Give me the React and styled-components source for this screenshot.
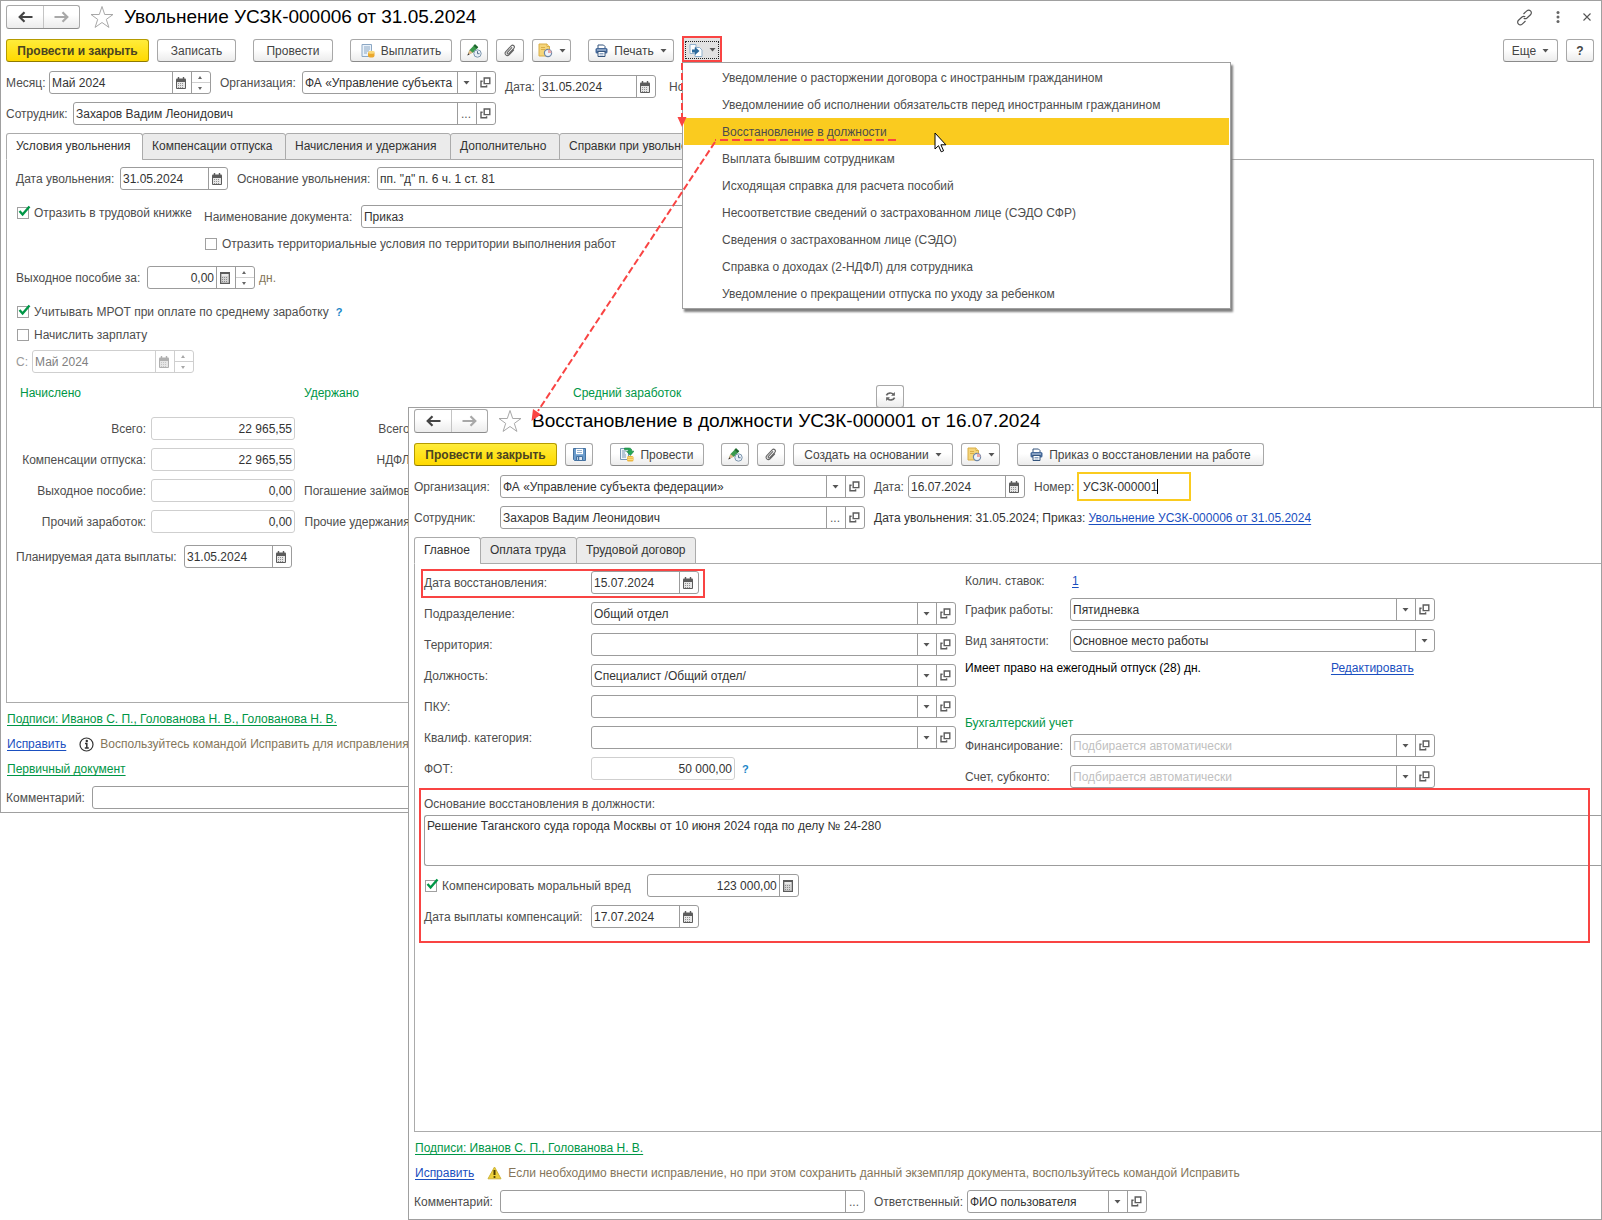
import React, { useId } from 'react'
import styled, { createGlobalStyle, css } from 'styled-components'

const GlobalStyle = createGlobalStyle`
  * {
    box-sizing: border-box;
  }
  body {
    margin: 0;
    background: #fff;
    color: #4d4d4d;
    font-family: "Liberation Sans", Arial, sans-serif;
    font-size: 12px;
    line-height: 16px;
  }
  button, input, select, textarea {
    font: inherit;
    color: inherit;
    margin: 0;
  }
`

const Desktop = styled.div`
  position: relative;
  min-height: 100vh;
  overflow: hidden;
`

const Window = styled.section`
  display: flex;
  flex-direction: column;
  background: #fff;
  border: 1px solid #a0a0a0;
  padding: 4px 7px 3px 5px;
`

const FrontWindow = styled(Window)`
  position: absolute;
  top: 407px;
  left: 408px;
  right: 0;
  padding: 1px 0 6px 5px;
  overflow: hidden;
`

const Header = styled.header`
  display: flex;
  align-items: center;
  height: 24px;
`

const Title = styled.h1`
  margin: 0 0 0 10px;
  flex: 1;
  color: #000;
  font-size: 19px;
  font-weight: normal;
  line-height: 24px;
  white-space: nowrap;
`

const NavGroup = styled.div`
  display: flex;
  height: 24px;
  margin-right: 10px;
  border: 1px solid #a8a8a8;
  border-bottom-color: #8c8c8c;
  border-radius: 3px;
  background: linear-gradient(#fff 40%, #ececec);
`

const NavButton = styled.button`
  display: flex;
  align-items: center;
  justify-content: center;
  width: 36px;
  padding: 0;
  border: 0;
  background: none;
  color: #444;
  & + & {
    border-left: 1px solid #c4c4c4;
    color: #a8a8a8;
  }
`

const PlainButton = styled.button`
  display: flex;
  padding: 0;
  border: 0;
  background: none;
  color: #555;
`

const WindowTools = styled.div`
  display: flex;
  align-items: center;
  gap: 23px;
  padding-right: 3px;
`

const Toolbar = styled.div`
  display: flex;
  gap: 8px;
  margin-top: 10px;
`

const Button = styled.button`
  display: flex;
  align-items: center;
  justify-content: center;
  gap: 6px;
  width: ${({ $width }) => $width}px;
  height: 23px;
  margin-left: ${({ $apart }) => ($apart ? 9 : 0)}px;
  padding: 0;
  border: 1px solid #a8a8a8;
  border-bottom: 1px solid #8a8a8a;
  border-radius: 3px;
  background: linear-gradient(#fff 45%, #ececec);
  color: #444;
  font-weight: ${({ $bold }) => ($bold ? 'bold' : 'normal')};
  white-space: nowrap;
  ${({ $main }) => $main && css`
    border-color: #b59b00;
    border-bottom-color: #8f7a00;
    background: linear-gradient(#ffec3a, #ffd900);
    color: #4a4420;
    font-weight: bold;
  `}
`

const Spacer = styled.div`
  flex: 1;
`

const MenuAnchor = styled.div`
  position: relative;
  display: flex;
  height: 26px;
  margin-top: -3px;
  border: 2px solid #f94443;
  padding: 3px 1px 0;
  background: #e2e2e2;
`

const PressedButton = styled(Button)`
  border: 1px dotted #222;
  border-radius: 0;
  background: #e2e2e2;
  height: 18px;
`

const Menu = styled.ul`
  position: absolute;
  z-index: 3;
  top: 24px;
  left: -2px;
  width: 549px;
  margin: 0;
  padding: 1px;
  list-style: none;
  background: #fff;
  border: 1px solid #a0a0a0;
  box-shadow: 2px 3px 2px #808080;
`

const MenuItem = styled.button`
  display: block;
  width: 100%;
  height: 27px;
  padding: 0 0 0 38px;
  border: 0;
  background: ${({ $active }) => ($active ? '#facb1f' : 'none')};
  text-align: left;
  white-space: nowrap;
`

const HeadFields = styled.div`
  display: flex;
  align-items: flex-start;
  gap: 9px;
  margin-top: 9px;
`

const Rows = styled.div`
  display: flex;
  flex-direction: column;
  gap: 8px;
`

const Row = styled.div`
  display: flex;
  align-items: ${({ $top }) => ($top ? 'flex-start' : 'center')};
  gap: ${({ $gap }) => $gap || 0}px;
  margin-top: ${({ $space }) => $space || 0}px;
`

const Labeled = styled.div`
  display: flex;
  align-items: center;
  flex: ${({ $grow }) => ($grow ? 1 : 'none')};
  position: relative;
`

const Label = styled.label`
  width: ${({ $width }) => ($width ? `${$width}px` : 'auto')};
  padding-right: 5px;
  text-align: ${({ $right }) => ($right ? 'right' : 'left')};
  white-space: nowrap;
  ${({ $muted }) => $muted && 'color: #999;'}
`

const Field = styled.div`
  display: flex;
  flex: ${({ $width }) => ($width ? 'none' : 1)};
  width: ${({ $width }) => ($width ? `${$width}px` : 'auto')};
  height: 23px;
  border: 1px solid ${({ $pale }) => ($pale ? '#cfcfcf' : '#9c9c9c')};
  border-radius: 3px;
  background: #fff;
  color: ${({ $muted }) => ($muted ? '#808080' : '#333')};
`

const inputStyle = css`
  flex: 1;
  min-width: 0;
  width: 100%;
  padding: 0 2px;
  border: 0;
  outline: 0;
  background: none;
  appearance: none;
`

const Input = styled.input`
  ${inputStyle}
  text-align: ${({ $right }) => ($right ? 'right' : 'left')};
`

const Select = styled.select`
  ${inputStyle}
  color: ${({ $hint }) => ($hint ? '#c0c0c0' : '#333')};
`

const Cell = styled.button`
  display: flex;
  align-items: center;
  justify-content: center;
  width: 19px;
  padding: 0 2px 0 0;
  border: 0;
  border-left: 1px solid ${({ $muted }) => ($muted ? '#cfcfcf' : '#9c9c9c')};
  background: none;
  color: ${({ $muted }) => ($muted ? '#b0b0b0' : '#5c5c5c')};
`

const Stepper = styled.span`
  display: flex;
  flex-direction: column;
  width: 19px;
  border-left: 1px solid ${({ $muted }) => ($muted ? '#cfcfcf' : '#9c9c9c')};
  color: ${({ $muted }) => ($muted ? '#a8a8a8' : '#666')};
`

const Step = styled.button`
  display: flex;
  flex: 1;
  align-items: center;
  justify-content: center;
  padding: 0 2px 0 0;
  border: 0;
  background: none;
  & + & {
    border-top: 1px solid ${({ $muted }) => ($muted ? '#cfcfcf' : '#9c9c9c')};
  }
`

const Tabs = styled.div`
  display: flex;
  margin-top: 8px;
`

const Tab = styled.button`
  height: 27px;
  margin-right: -1px;
  padding: 0 0 2px 9px;
  width: ${({ $width }) => $width}px;
  border: 1px solid #ababab;
  border-bottom-color: ${({ $active }) => ($active ? '#fff' : '#ababab')};
  border-radius: 3px 3px 0 0;
  background: ${({ $active }) => ($active ? '#fff' : '#ebebeb')};
  color: #333;
  text-align: left;
  white-space: nowrap;
  z-index: 1;
`

const Panel = styled.div`
  display: flex;
  flex-direction: column;
  min-height: ${({ $height }) => $height}px;
  margin-top: -1px;
  padding: 7px 9px;
  border: 1px solid #ababab;
  ${({ $open }) => $open && css`
    border-right: 0;
    padding-right: 0;
  `}
`

const CheckLabel = styled.label`
  display: flex;
  align-items: center;
  position: relative;
  gap: 5px;
  height: 16px;
  padding-left: 1px;
  white-space: nowrap;
  svg {
    position: absolute;
    left: 2px;
    top: 0;
    pointer-events: none;
  }
`

const CheckInput = styled.input`
  appearance: none;
  width: 12px;
  height: 12px;
  border: 1px solid #a0a0a0;
  background: #fff;
`

const Totals = styled.div`
  display: grid;
  grid-template-columns: 275px 260px 294px auto;
  justify-content: start;
  align-items: start;
  column-gap: 9px;
  margin-top: 12px;
  padding-left: 4px;
`

const Caption = styled.h2`
  margin: 0 0 ${({ $below }) => $below || 0}px;
  color: #009646;
  font-size: 12px;
  font-weight: normal;
  line-height: 16px;
`

const Link = styled.a`
  color: ${({ $green }) => ($green ? '#009646' : '#1a4fc0')};
  text-decoration: underline;
  text-underline-offset: 2px;
  white-space: nowrap;
`

const Footer = styled.footer`
  display: flex;
  flex-direction: column;
  gap: 9px;
  margin-top: 8px;
`

const FooterLine = styled.div`
  display: flex;
  align-items: center;
  height: 16px;
  padding-left: 1px;
`

const Note = styled.span`
  display: flex;
  align-items: center;
  gap: 6px;
  margin-left: 13px;
  color: #84765a;
  white-space: nowrap;
`

const Unit = styled.span`
  margin-left: 4px;
  color: #84765a;
`

const Help = styled.button`
  padding: 0;
  margin-left: 7px;
  border: 0;
  background: none;
  color: #1b86c8;
  font-size: 11px;
  font-weight: bold;
`

const Dark = styled.span`
  color: ${({ $black }) => ($black ? '#000' : '#333')};
  white-space: nowrap;
`

const HeadGrid = styled.div`
  display: grid;
  grid-template-columns: 451px auto;
  justify-content: start;
  align-items: center;
  gap: 8px 9px;
  margin-top: 9px;
`

const FocusBox = styled.div`
  display: flex;
  align-items: center;
  width: 114px;
  height: 29px;
  margin: -3px 0;
  padding-left: 4px;
  border: 2px solid #facb1f;
  color: #333;
`

const GrowInput = styled.input`
  field-sizing: content;
  padding: 0;
  border: 0;
  outline: 0;
  background: none;
`

const Caret = styled.span`
  width: 1px;
  height: 15px;
  background: #000;
`

const FormGrid = styled.div`
  display: grid;
  grid-template-columns: 532px 470px;
  column-gap: 9px;
  align-items: start;
`

const SideColumn = styled.div`
  display: flex;
  flex-direction: column;
  padding-top: 2px;
`

const Reason = styled.div`
  position: relative;
  display: flex;
  flex-direction: column;
  margin-top: 8px;
  &::after {
    content: '';
    position: absolute;
    inset: -8px 11px -15px -5px;
    border: 2px solid #f94443;
    pointer-events: none;
  }
`

const FramedRow = styled(Labeled)`
  align-self: flex-start;
  &::after {
    content: '';
    position: absolute;
    inset: -2px -6px -4px -3px;
    border: 2px solid #f94443;
    pointer-events: none;
  }
`

const TextArea = styled.textarea`
  height: 51px;
  margin: 3px 0 8px;
  padding: 2px;
  border: 1px solid #9c9c9c;
  border-right: 0;
  border-radius: 3px 0 0 3px;
  color: #333;
  resize: none;
  outline: 0;
`

const Annotation = styled.svg`
  position: absolute;
  z-index: 4;
  top: 0;
  left: 0;
  pointer-events: none;
`

/* icons */

const ArrowIcon = ({ back }) => (
  <svg width="15" height="12" viewBox="0 0 15 12" fill="none" stroke="currentColor" strokeWidth="2.200">
    {back ? <path d="M14.500 6H2M6.500 1.200L1.700 6l4.800 4.800" /> : <path d="M.5 6H13M8.500 1.200L13.300 6l-4.800 4.800" />}
  </svg>
)

const StarIcon = () => (
  <svg width="24" height="24" viewBox="0 0 24 24" fill="#fff" stroke="#a8a8a8">
    <path d="M12 1.500l2.700 8h8.300l-6.700 4.900 2.600 8L12 17.500l-6.900 4.900 2.600-8L1 9.500h8.300z" />
  </svg>
)

const CaretDown = () => (
  <svg width="7" height="4" viewBox="0 0 7 4"><path d="M.5 0h6L3.500 3.600z" fill="#555" /></svg>
)

const OpenIcon = () => (
  <svg width="11" height="11" viewBox="0 0 11 11" fill="none" stroke="currentColor" strokeWidth="1.400">
    <path d="M4.200 1h5.600v5.600H4.200zM2.600 4.200H1v5.600h5.600V8.200" />
  </svg>
)

const CalendarIcon = () => (
  <svg width="10" height="12" viewBox="0 0 10 12">
    <path d="M2.500 0v3M7.500 0v3" stroke="currentColor" strokeWidth="1.400" />
    <path d="M.5 4v7.500h9V4" fill="#e6e6e6" stroke="currentColor" />
    <path d="M0 5V2.500Q0 1.500 1 1.500h8q1 0 1 1V5z" fill="currentColor" />
    <path d="M2 6.500h6M2 8.500h6M2 10.500h6" stroke="currentColor" strokeDasharray="1 1" opacity=".6" />
  </svg>
)

const CalcIcon = () => (
  <svg width="10" height="12" viewBox="0 0 10 12">
    <rect x=".6" y=".6" width="8.800" height="10.800" fill="#d4d4d4" stroke="currentColor" strokeWidth="1.200" />
    <path d="M2 3h6" stroke="#fff" />
    <path d="M1 1.500h8" stroke="currentColor" />
    <path d="M2 5.500h6M2 7.500h6M2 9.500h6" stroke="currentColor" strokeDasharray="1 1" opacity=".6" />
  </svg>
)

const PencilIcon = () => (
  <svg width="15" height="15" viewBox="0 0 15 15">
    <path d="M1 11l1.500-4L8 1.200l3.200 3L6 9.800z" fill="#3a9a4c" />
    <path d="M8 1.200l3.200 3-1.500 1.600-3.200-3z" fill="#20652f" />
    <path d="M.5 12l2-5 3.300 2.800z" fill="#e5b98b" />
    <path d="M.3 12.500l1-2.300 1.400 1.300z" fill="#333" />
    <circle cx="10.500" cy="10.500" r="3.700" fill="#e8eff6" stroke="#7d96ae" />
    <path d="M10.500 8.200v2.500h2" fill="none" stroke="#55708a" />
  </svg>
)

const ClipIcon = () => (
  <svg width="12" height="13" viewBox="0 0 12 13" fill="none" stroke="#666" strokeWidth="1.100" strokeLinecap="round">
    <path d="M7.800 3.700L3.400 8.400c-.8 1 .5 2.200 1.400 1.300l5-5.300c1.700-2-.8-4.300-2.600-2.500L1.800 7.600c-2 2.300 1 5.400 3.300 3.200L9.600 6" />
  </svg>
)

const FileClockIcon = () => (
  <svg width="15" height="15" viewBox="0 0 15 15">
    <path d="M1 1h8l2.500 2.500V13H1z" fill="#f5d57a" stroke="#d9ae48" />
    <path d="M9 1v2.500h2.500" fill="#fff3c9" stroke="#d9ae48" />
    <path d="M3 4.500h4M3 6.500h4" stroke="#d9ae48" />
    <circle cx="10" cy="10" r="3.600" fill="#eef3fa" stroke="#6d87a8" strokeWidth="1.200" />
    <path d="M10 10V6.500A3.500 3.500 0 0113.500 10z" fill="#e9a9a9" />
  </svg>
)

const PrinterIcon = () => (
  <svg width="13" height="13" viewBox="0 0 13 13">
    <path d="M3 4V1h5.500L10 2.500V4" fill="#fff" stroke="#34547c" />
    <rect x=".5" y="4" width="12" height="5.500" rx="1.500" fill="#45699a" />
    <path d="M3 7.500h7v5H3z" fill="#fff" stroke="#34547c" />
    <path d="M4.500 9.500h4M4.500 11h4" stroke="#8aa3c2" />
    <path d="M2 6h9" stroke="#c9d8ea" />
  </svg>
)

const PayIcon = () => (
  <svg width="14" height="14" viewBox="0 0 14 14">
    <path d="M1 .5h9.500v12H1z" fill="#eaf2fa" stroke="#8ba7c4" />
    <path d="M3 3h6M3 5h6M3 7h5M3 9h3" stroke="#8ba7c4" />
    <rect x="7" y="7.500" width="6.500" height="6" rx="2" fill="#eaa82e" />
    <ellipse cx="10.500" cy="8.200" rx="3.200" ry="1.500" fill="#fbd878" />
  </svg>
)

const PostIcon = () => (
  <svg width="14" height="15" viewBox="0 0 14 15">
    <path d="M.5 1.500h8v11h-8z" fill="#f2f7fb" stroke="#7896b4" />
    <path d="M2 4h4M2 6h3M2 8h4M2 10h4" stroke="#7896b4" />
    <path d="M4.500 1h4.300c2.500 0 3 1.500 3 3.200H14L10.300 8.500 6.500 4.200H9c0-1-.4-1.500-1.500-1.500h-3z" fill="#25a955" stroke="#158040" strokeWidth=".6" />
    <rect x="7" y="9" width="6.500" height="5.500" rx="1.500" fill="#ecb43a" />
    <path d="M7.500 10.800h5.500M7.500 12.600h5.500" stroke="#fbe08c" />
  </svg>
)

const SaveIcon = () => (
  <svg width="13" height="13" viewBox="0 0 13 13">
    <path d="M.5.5h12v12h-11l-1-1z" fill="#6b9ccc" stroke="#4471a0" />
    <path d="M3 .8h7v5.400H3z" fill="#fff" />
    <path d="M4 2.500h5M4 4.500h5" stroke="#9ab4cf" />
    <path d="M3.500 8.500h6v4h-6z" fill="#dfe9f3" stroke="#4471a0" />
    <path d="M5.500 9v3" stroke="#4471a0" strokeWidth="1.500" />
  </svg>
)

const CreateIcon = () => (
  <svg width="14" height="13" viewBox="0 0 14 13">
    <path d="M1 .5h6v9H1z" fill="#fff" stroke="#8fb0cc" />
    <path d="M6 3.500h4.500L13 6v6.500H6z" fill="#fff" stroke="#8fb0cc" />
    <path d="M3 5.500h3V3l4.500 4L6 11V8.500H3z" fill="#2c6a9c" />
  </svg>
)

const RefreshIcon = () => (
  <svg width="11" height="11" viewBox="0 0 12 12" fill="none" stroke="#666" strokeWidth="1.800">
    <path d="M1.500 4.800C3 1.700 7 1.500 9.200 3.600M10.500 7.200C9 10.300 5 10.500 2.800 8.400" />
    <path d="M10.800 1v4.200H6.600zM1.200 11V6.800h4.200z" fill="#666" stroke="none" />
  </svg>
)

const LinkIcon = () => (
  <svg width="17" height="17" viewBox="0 0 17 17" fill="none" stroke="#555" strokeWidth="1.200">
    <path d="M7.500 5L10.800 1.900c1.300-1.200 2.800-.9 3.700 0 1 1 1.300 2.600 0 3.800L11 9c-1.200 1-2.300.9-3.300.2M9.500 12l-3.300 3.100c-1.300 1.200-2.800.9-3.700 0-1-1-1.300-2.600 0-3.800L6 8c1.200-1 2.300-.9 3.300-.2" />
  </svg>
)

const DotsIcon = () => (
  <svg width="4" height="12" viewBox="0 0 4 12" fill="#666">
    <circle cx="2" cy="1.600" r="1.500" /><circle cx="2" cy="6" r="1.500" /><circle cx="2" cy="10.400" r="1.500" />
  </svg>
)

const CloseIcon = () => (
  <svg width="8" height="8" viewBox="0 0 8 8" stroke="#555" strokeWidth="1.100"><path d="M.5.5l7 7M7.500.5l-7 7" /></svg>
)

const InfoIcon = () => (
  <svg width="15" height="15" viewBox="0 0 15 15" fill="none" stroke="#333">
    <circle cx="7.500" cy="7.500" r="6.500" strokeWidth="1.200" />
    <path d="M6 6.500h1.800v4.300M5.800 11h4" strokeWidth="1.500" />
    <circle cx="7.800" cy="4" r="1.200" fill="#333" stroke="none" />
  </svg>
)

const WarningIcon = () => (
  <svg width="15" height="14" viewBox="0 0 15 14">
    <path d="M7.500 1L14 12.800H1z" fill="#ecd03a" stroke="#cdb43c" strokeLinejoin="round" />
    <path d="M7.500 4v5" stroke="#4a3c00" strokeWidth="2" />
    <circle cx="7.500" cy="11" r="1.100" fill="#4a3c00" />
  </svg>
)

const TickIcon = () => (
  <svg width="13" height="13" viewBox="0 0 13 13" fill="none" stroke="#009646" strokeWidth="2.400">
    <path d="M1.500 6L4.600 9.500 11.500 1.500" />
  </svg>
)

/* controls */

const Nav = () => (
  <NavGroup>
    <NavButton aria-label="Назад"><ArrowIcon back /></NavButton>
    <NavButton aria-label="Вперед"><ArrowIcon /></NavButton>
  </NavGroup>
)

const StepperCell = ({ muted }) => (
  <Stepper $muted={muted}>
    <Step $muted={muted} aria-label="Больше">
      <svg width="4" height="3" viewBox="0 0 4 3"><path d="M0 3h4L2 0z" fill="currentColor" /></svg>
    </Step>
    <Step $muted={muted} aria-label="Меньше">
      <svg width="4" height="3" viewBox="0 0 4 3"><path d="M0 0h4L2 3z" fill="currentColor" /></svg>
    </Step>
  </Stepper>
)

// cells: any of "calendar", "calc", "step", "dots", "open"
const TextField = ({ label, labelWidth, right, value = '', width, numeric, pale, muted, cells = [], grow, after, framed }) => {
  const id = useId()
  const Wrap = framed ? FramedRow : Labeled
  return (
    <Wrap $grow={grow}>
      {label && <Label htmlFor={id} $width={labelWidth} $right={right} $muted={muted}>{label}</Label>}
      <Field $width={width} $pale={pale || muted} $muted={muted}>
        <Input id={id} aria-label={label ? undefined : 'Сумма'} defaultValue={value} $right={numeric} disabled={muted} />
        {cells.includes('calendar') && <Cell $muted={muted} aria-label="Календарь"><CalendarIcon /></Cell>}
        {cells.includes('calc') && <Cell aria-label="Калькулятор"><CalcIcon /></Cell>}
        {cells.includes('step') && <StepperCell muted={muted} />}
        {cells.includes('dots') && <Cell aria-label="Выбрать">...</Cell>}
        {cells.includes('open') && <Cell aria-label="Открыть"><OpenIcon /></Cell>}
      </Field>
      {after}
    </Wrap>
  )
}

const SelectField = ({ label, labelWidth, value = '', width, hint, open = true, grow }) => {
  const id = useId()
  return (
    <Labeled $grow={grow}>
      <Label htmlFor={id} $width={labelWidth}>{label}</Label>
      <Field $width={width}>
        <Select id={id} $hint={hint} defaultValue={value}>
          <option>{value}</option>
        </Select>
        <Cell as="span" aria-hidden="true"><CaretDown /></Cell>
        {open && <Cell aria-label="Открыть"><OpenIcon /></Cell>}
      </Field>
    </Labeled>
  )
}

const CheckBox = ({ checked, children }) => (
  <CheckLabel>
    <CheckInput type="checkbox" defaultChecked={checked} />
    {checked && <TickIcon />}
    {children}
  </CheckLabel>
)

const TabList = ({ tabs }) => (
  <Tabs role="tablist">
    {tabs.map(([name, width], index) => (
      <Tab key={name} role="tab" $width={width} $active={index === 0} aria-selected={index === 0}>{name}</Tab>
    ))}
  </Tabs>
)

const menuItems = [
  'Уведомление о расторжении договора с иностранным гражданином',
  'Уведомлениие об исполнении обязательств перед иностранным гражданином',
  'Восстановление в должности',
  'Выплата бывшим сотрудникам',
  'Исходящая справка для расчета пособий',
  'Несоответствие сведений о застрахованном лице (СЭДО СФР)',
  'Сведения о застрахованном лице (СЭДО)',
  'Справка о доходах (2-НДФЛ) для сотрудника',
  'Уведомление о прекращении отпуска по уходу за ребенком',
]

const accrued = [
  ['Всего:', '22 965,55'],
  ['Компенсации отпуска:', '22 965,55'],
  ['Выходное пособие:', '0,00'],
  ['Прочий заработок:', '0,00'],
]

const withheld = ['Всего:', 'НДФЛ:', 'Погашение займов:', 'Прочие удержания:']

const DismissalWindow = () => (
  <Window>
    <Header>
      <Nav />
      <PlainButton aria-label="В избранное"><StarIcon /></PlainButton>
      <Title>Увольнение УСЗК-000006 от 31.05.2024</Title>
      <WindowTools>
        <PlainButton aria-label="Ссылка"><LinkIcon /></PlainButton>
        <PlainButton aria-label="Меню"><DotsIcon /></PlainButton>
        <PlainButton aria-label="Закрыть"><CloseIcon /></PlainButton>
      </WindowTools>
    </Header>
    <Toolbar>
      <Button $main $width={143}>Провести и закрыть</Button>
      <Button $width={79}>Записать</Button>
      <Button $apart $width={80}>Провести</Button>
      <Button $apart $width={102}><PayIcon />Выплатить</Button>
      <Button $width={28} aria-label="Подписать"><PencilIcon /></Button>
      <Button $width={28} aria-label="Файлы"><ClipIcon /></Button>
      <Button $width={39} aria-label="Задачи"><FileClockIcon /><CaretDown /></Button>
      <Button $apart $width={86}><PrinterIcon />Печать<CaretDown /></Button>
      <MenuAnchor>
        <PressedButton $width={34} aria-label="Создать на основании"><CreateIcon /><CaretDown /></PressedButton>
        <Menu>
          {menuItems.map((item, index) => (
            <li key={item}><MenuItem $active={index === 2}>{item}</MenuItem></li>
          ))}
        </Menu>
      </MenuAnchor>
      <Spacer />
      <Button $width={55}>Еще<CaretDown /></Button>
      <Button $bold $width={28}>?</Button>
    </Toolbar>
    <HeadFields>
      <Rows>
        <Row $gap={9}>
          <TextField label="Месяц:" labelWidth={43} value="Май 2024" width={162} cells={['calendar', 'step']} />
          <SelectField label="Организация:" labelWidth={82} value="ФА «Управление субъекта" width={194} />
        </Row>
        <TextField label="Сотрудник:" labelWidth={67} value="Захаров Вадим Леонидович" cells={['dots', 'open']} />
      </Rows>
      <Row $gap={13} $space={4}>
        <TextField label="Дата:" labelWidth={34} value="31.05.2024" width={117} cells={['calendar']} />
        <TextField label="Номер:" value="УСЗК-000006" width={110} />
      </Row>
    </HeadFields>
    <TabList
      tabs={[
        ['Условия увольнения', 137],
        ['Компенсации отпуска', 144],
        ['Начисления и удержания', 166],
        ['Дополнительно', 110],
        ['Справки при увольнении', 166],
      ]}
    />
    <Panel $height={544}>
      <Row $gap={9}>
        <TextField label="Дата увольнения:" labelWidth={104} value="31.05.2024" width={108} cells={['calendar']} />
        <TextField label="Основание увольнения:" labelWidth={140} value={'пп. "д" п. 6 ч. 1 ст. 81'} width={700} cells={['dots']} />
      </Row>
      <Row $top $gap={12} $space={15}>
        <CheckBox checked>Отразить в трудовой книжке</CheckBox>
        <Rows>
          <TextField label="Наименование документа:" labelWidth={157} value="Приказ" width={500} />
          <CheckBox>Отразить территориальные условия по территории выполнения работ</CheckBox>
        </Rows>
      </Row>
      <Row $space={14}>
        <TextField label="Выходное пособие за:" labelWidth={131} value="0,00" numeric width={108} cells={['calc', 'step']} />
        <Unit>дн.</Unit>
      </Row>
      <Row $space={15}>
        <CheckBox checked>Учитывать МРОТ при оплате по среднему заработку</CheckBox>
        <Help>?</Help>
      </Row>
      <Row $space={7}>
        <CheckBox>Начислить зарплату</CheckBox>
      </Row>
      <Row $space={7}>
        <TextField muted label="С:" labelWidth={16} value="Май 2024" width={162} cells={['calendar', 'step']} />
      </Row>
      <Totals>
        <div>
          <Caption $below={16}>Начислено</Caption>
          <Rows>
            {accrued.map(([label, value]) => (
              <TextField key={label} label={label} labelWidth={131} right value={value} numeric pale width={144} />
            ))}
          </Rows>
        </div>
        <div>
          <Caption $below={16}>Удержано</Caption>
          <Rows>
            {withheld.map((label) => (
              <TextField key={label} label={label} labelWidth={114} right value="0,00" numeric pale width={144} />
            ))}
          </Rows>
        </div>
        <Caption>Средний заработок</Caption>
        <Button $width={28} aria-label="Обновить"><RefreshIcon /></Button>
      </Totals>
      <Row $space={12}>
        <TextField label="Планируемая дата выплаты:" labelWidth={168} value="31.05.2024" width={108} cells={['calendar']} />
      </Row>
    </Panel>
    <Footer>
      <FooterLine><Link $green href="#sign">Подписи: Иванов С. П., Голованова Н. В., Голованова Н. В.</Link></FooterLine>
      <FooterLine>
        <Link href="#fix">Исправить</Link>
        <Note><InfoIcon />Воспользуйтесь командой Исправить для исправления</Note>
      </FooterLine>
      <FooterLine><Link $green href="#source">Первичный документ</Link></FooterLine>
      <TextField label="Комментарий:" labelWidth={86} />
    </Footer>
  </Window>
)

const ReinstatementWindow = () => {
  const numberId = useId()
  const reasonId = useId()
  return (
    <FrontWindow>
      <Header>
        <Nav />
        <PlainButton aria-label="В избранное"><StarIcon /></PlainButton>
        <Title as="h2">Восстановление в должности УСЗК-000001 от 16.07.2024</Title>
      </Header>
      <Toolbar>
        <Button $main $width={143}>Провести и закрыть</Button>
        <Button $width={28} aria-label="Записать"><SaveIcon /></Button>
        <Button $apart $width={94}><PostIcon />Провести</Button>
        <Button $apart $width={28} aria-label="Подписать"><PencilIcon /></Button>
        <Button $width={28} aria-label="Файлы"><ClipIcon /></Button>
        <Button $width={160}>Создать на основании<CaretDown /></Button>
        <Button $width={39} aria-label="Задачи"><FileClockIcon /><CaretDown /></Button>
        <Button $apart $width={247}><PrinterIcon />Приказ о восстановлении на работе</Button>
      </Toolbar>
      <HeadGrid>
        <SelectField label="Организация:" labelWidth={86} value="ФА «Управление субъекта федерации»" />
        <Row $gap={9}>
          <TextField label="Дата:" labelWidth={34} value="16.07.2024" width={117} cells={['calendar']} />
          <Labeled>
            <Label htmlFor={numberId} $width={43}>Номер:</Label>
            <FocusBox>
              <GrowInput id={numberId} defaultValue="УСЗК-000001" />
              <Caret />
            </FocusBox>
          </Labeled>
        </Row>
        <TextField label="Сотрудник:" labelWidth={86} value="Захаров Вадим Леонидович" cells={['dots', 'open']} />
        <Dark>
          Дата увольнения: 31.05.2024; Приказ: <Link href="#dismissal">Увольнение УСЗК-000006 от 31.05.2024</Link>
        </Dark>
      </HeadGrid>
      <TabList tabs={[['Главное', 67], ['Оплата труда', 97], ['Трудовой договор', 120]]} />
      <Panel $open $height={569}>
        <FormGrid>
          <Rows>
            <TextField framed label="Дата восстановления:" labelWidth={167} value="15.07.2024" width={108} cells={['calendar']} />
            <SelectField label="Подразделение:" labelWidth={167} value="Общий отдел" />
            <SelectField label="Территория:" labelWidth={167} />
            <SelectField label="Должность:" labelWidth={167} value="Специалист /Общий отдел/" />
            <SelectField label="ПКУ:" labelWidth={167} />
            <SelectField label="Квалиф. категория:" labelWidth={167} />
            <TextField label="ФОТ:" labelWidth={167} value="50 000,00" numeric pale width={144} after={<Help>?</Help>} />
          </Rows>
          <SideColumn>
            <Row>
              <Label as="span" $width={107}>Колич. ставок:</Label>
              <Link href="#rate">1</Link>
            </Row>
            <Row $space={9}><SelectField grow label="График работы:" labelWidth={105} value="Пятидневка" /></Row>
            <Row $space={8}><SelectField grow label="Вид занятости:" labelWidth={105} value="Основное место работы" open={false} /></Row>
            <Row $space={8} $gap={130}>
              <Dark $black>Имеет право на ежегодный отпуск (28) дн.</Dark>
              <Link href="#edit">Редактировать</Link>
            </Row>
            <Row $space={39}><Caption>Бухгалтерский учет</Caption></Row>
            <Row $space={3}><SelectField grow hint label="Финансирование:" labelWidth={105} value="Подбирается автоматически" /></Row>
            <Row $space={8}><SelectField grow hint label="Счет, субконто:" labelWidth={105} value="Подбирается автоматически" /></Row>
          </SideColumn>
        </FormGrid>
        <Reason>
          <Label htmlFor={reasonId}>Основание восстановления в должности:</Label>
          <TextArea id={reasonId} defaultValue="Решение Таганского суда города Москвы от 10 июня 2024 года по делу № 24-280" />
          <Rows>
            <Row $gap={16}>
              <CheckBox checked>Компенсировать моральный вред</CheckBox>
              <TextField value="123 000,00" numeric width={152} cells={['calc']} />
            </Row>
            <TextField label="Дата выплаты компенсаций:" labelWidth={167} value="17.07.2024" width={108} cells={['calendar']} />
          </Rows>
        </Reason>
      </Panel>
      <Footer>
        <FooterLine><Link $green href="#sign2">Подписи: Иванов С. П., Голованова Н. В.</Link></FooterLine>
        <FooterLine>
          <Link href="#fix2">Исправить</Link>
          <Note>
            <WarningIcon />
            Если необходимо внести исправление, но при этом сохранить данный экземпляр документа, воспользуйтесь командой Исправить
          </Note>
        </FooterLine>
        <Row $gap={9}>
          <TextField label="Комментарий:" labelWidth={86} width={365} cells={['dots']} />
          <SelectField label="Ответственный:" labelWidth={93} value="ФИО пользователя" width={180} />
        </Row>
      </Footer>
    </FrontWindow>
  )
}

const Arrows = () => (
  <Annotation width="1000" height="440" viewBox="0 0 1000 440" fill="none" stroke="#f94443" strokeWidth="2">
    <path d="M682 63v54" strokeDasharray="7 3" />
    <path d="M677.500 117h9L682 127z" fill="#f94443" stroke="none" />
    <path d="M896 140H715" strokeDasharray="8 4" />
    <path d="M715 142L538 411" strokeDasharray="7 3" />
    <path d="M531.500 421l1.500-12 8 5.500z" fill="#f94443" stroke="none" />
    <path d="M935 133v16l3.500-3.300 2.700 6.100 2.400-1-2.700-6h5z" fill="#fff" stroke="#000" strokeWidth="1" />
  </Annotation>
)

const App = () => (
  <Desktop>
    <GlobalStyle />
    <DismissalWindow />
    <ReinstatementWindow />
    <Arrows />
  </Desktop>
)

export default App
